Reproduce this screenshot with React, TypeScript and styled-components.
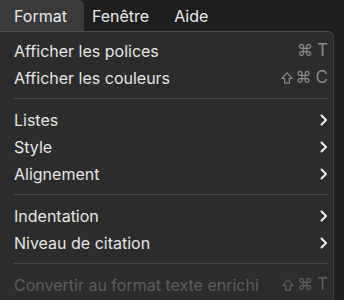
import * as React from 'react';
import styled, { createGlobalStyle } from 'styled-components';

const GlobalStyle = createGlobalStyle`
  html, body {
    margin: 0;
    padding: 0;
    background: #1e1e1e;
    width: 344px;
    height: 300px;
    overflow: hidden;
  }
  body {
    font-family: Inter, "Liberation Sans", Arial, sans-serif;
    -webkit-font-smoothing: antialiased;
  }
`;

const Page = styled.div`
  width: 344px;
  height: 300px;
  display: flex;
  flex-direction: column;
  background: #1e1e1e;
`;

const MenuBar = styled.div`
  height: 31px;
  display: flex;
  align-items: stretch;
  gap: 25px;
  padding-left: 14px;
  background: #1e1e1e;
  flex-shrink: 0;
`;

const BarItem = styled.div<{ $active?: boolean }>`
  position: relative;
  display: flex;
  align-items: center;
  font-size: 16px;
  color: #e8e8e8;

  &::before {
    content: '';
    display: ${(p) => (p.$active ? 'block' : 'none')};
    position: absolute;
    top: 0;
    bottom: 0;
    left: -14px;
    right: -17px;
    background: #3a3a3a;
    border-top-right-radius: 6px;
  }

  span {
    position: relative;
  }
`;

const Panel = styled.div`
  width: 334px;
  flex: 1;
  background: #2c2c2c;
  border-top: 1px solid #4e4e4e;
  border-right: 1px solid #3a3a3a;
  border-top-right-radius: 6px;
  padding: 5px 0 0;
  box-sizing: border-box;
`;

const Row = styled.div<{ $disabled?: boolean }>`
  height: 27px;
  display: flex;
  align-items: center;
  justify-content: space-between;
  padding: 0 5px 0 14px;
  font-size: 16px;
  color: ${(p) => (p.$disabled ? '#5e5e5e' : '#e4e4e4')};
`;

const Shortcut = styled.span<{ $disabled?: boolean }>`
  color: ${(p) => (p.$disabled ? '#5e5e5e' : '#8a8a8a')};
  display: flex;
  align-items: center;
  gap: 3px;
`;

const Symbol = styled.span`
  font-family: "DejaVu Sans", sans-serif;
  font-size: 16px;
  line-height: 1;
`;

const Letter = styled.span`
  font-family: Inter, "Liberation Sans", Arial, sans-serif;
  font-size: 17px;
  line-height: 1;
  margin-left: 1px;
`;

const Separator = styled.div`
  height: 15px;
  display: flex;
  align-items: center;
  padding: 0 5px 0 14px;

  &::after {
    content: '';
    flex: 1;
    height: 1px;
    background: #474747;
  }
`;

const Chevron = () => (
  <svg width="8" height="12" viewBox="0 0 8 12">
    <path d="M1.5 1.5 L6 6 L1.5 10.5" fill="none" stroke="#ececec" strokeWidth="2" strokeLinecap="round" strokeLinejoin="round" />
  </svg>
);

const ShiftIcon = () => (
  <svg width="12" height="12" viewBox="0 0 12 12">
    <path
      d="M6 0.9 L11.2 6.3 H8.3 V11.1 H3.7 V6.3 H0.8 Z"
      fill="none"
      stroke="currentColor"
      strokeWidth="1.2"
      strokeLinejoin="round"
    />
  </svg>
);

type Item =
  | { label: string; shift?: boolean; letter?: string; sub?: boolean; disabled?: boolean }
  | 'sep';

const items: Item[] = [
  { label: 'Afficher les polices', letter: 'T' },
  { label: 'Afficher les couleurs', shift: true, letter: 'C' },
  'sep',
  { label: 'Listes', sub: true },
  { label: 'Style', sub: true },
  { label: 'Alignement', sub: true },
  'sep',
  { label: 'Indentation', sub: true },
  { label: 'Niveau de citation', sub: true },
  'sep',
  { label: 'Convertir au format texte enrichi', shift: true, letter: 'T', disabled: true },
];

export default function App() {
  return (
    <Page>
      <GlobalStyle />
      <MenuBar>
        <BarItem $active><span>Format</span></BarItem>
        <BarItem><span>Fenêtre</span></BarItem>
        <BarItem><span>Aide</span></BarItem>
      </MenuBar>
      <Panel>
        {items.map((it, i) =>
          it === 'sep' ? (
            <Separator key={i} />
          ) : (
            <Row key={i} $disabled={it.disabled}>
              <span>{it.label}</span>
              {it.letter && (
                <Shortcut $disabled={it.disabled}>
                  {it.shift && <ShiftIcon />}
                  <Symbol>⌘</Symbol>
                  <Letter>{it.letter}</Letter>
                </Shortcut>
              )}
              {it.sub && <Chevron />}
            </Row>
          )
        )}
      </Panel>
    </Page>
  );
}
